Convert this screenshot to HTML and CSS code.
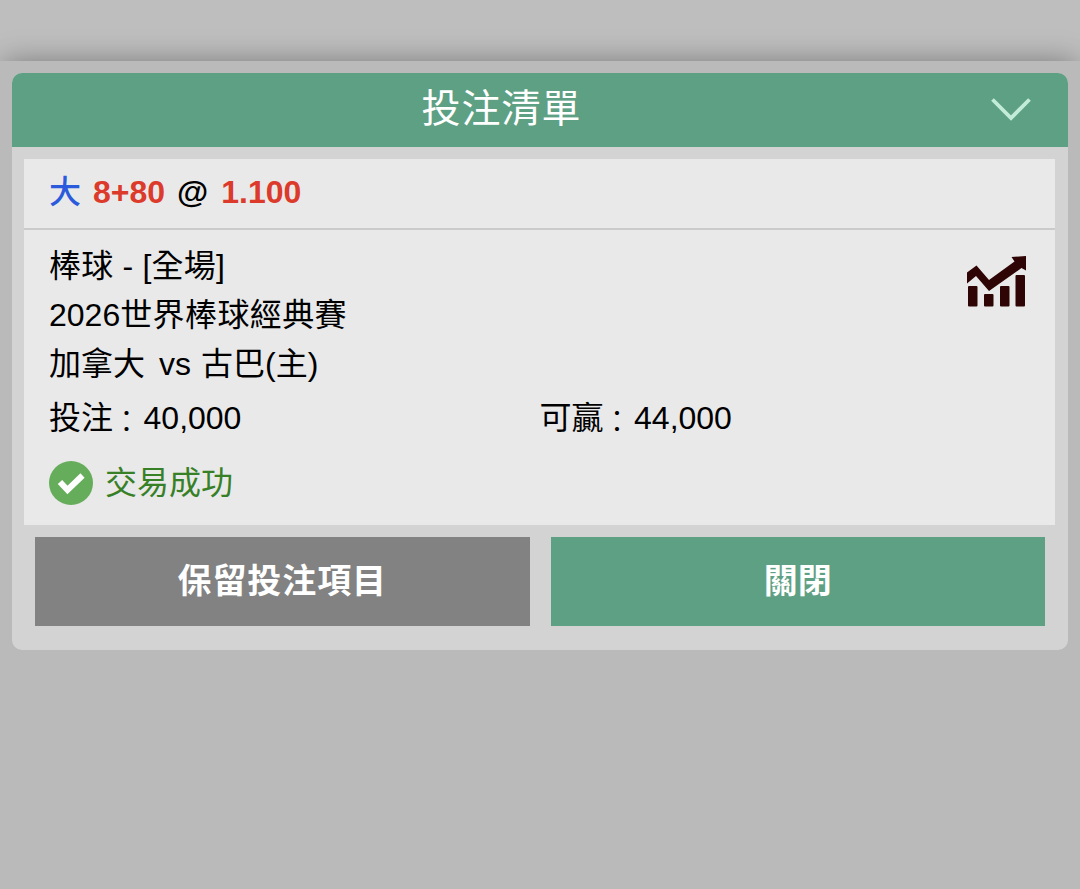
FILE: index.html
```html
<!DOCTYPE html>
<html lang="zh-TW">

<head>
  <meta charset="UTF-8">
  <meta name="viewport" content="width=device-width, initial-scale=1.0">
  <title>投注清單</title>
  <link rel="stylesheet" href="styles.css">
</head>

<body>

  <div class="sheet">
    <div class="betslip">
      <div class="header">
        <span class="title">投注清單</span>
        <svg class="chevron" width="40" height="24" viewBox="0 0 40 24">
          <path d="M1.5 1.5 L20 20 L38.5 1.5" fill="none" stroke="#c2ecd9" stroke-width="3.8" />
        </svg>
      </div>

      <div class="card">
        <div class="odds">
          <span class="pick">大</span>
          <span class="red">8+80</span>
          <span class="at">@</span>
          <span class="red">1.100</span>
        </div>

        <div class="detail">
          <div class="match">
            <div class="lines">
              <div class="line sport">棒球 - [全場]</div>
              <div class="line league">2026<span>世界棒球經典賽</span></div>
              <div class="line teams"><span>加拿大</span><span>vs</span><span>古巴(主)</span></div>
            </div>
            <svg class="stats" width="60" height="52" viewBox="0 0 60 52" fill="#2e0404">
              <path d="M0 16.5 L9.5 9.5 L22 24 L47.5 5.5 L44.5 1 L59 0 V14.5 L54.5 12 L22 35 L9 20 L0 27.5 Z" />
              <rect x="1" y="30" width="9.5" height="20.5" rx="1" />
              <rect x="17" y="38" width="9.5" height="12.5" rx="1" />
              <rect x="33" y="30" width="9.5" height="20.5" rx="1" />
              <rect x="48.5" y="19" width="9.5" height="31.5" rx="1" />
            </svg>
          </div>

          <div class="amounts">
            <div>投注<span class="colon">：</span>40,000</div>
            <div>可贏<span class="colon">：</span>44,000</div>
          </div>

          <div class="status">
            <svg width="44" height="44" viewBox="0 0 44 44">
              <circle cx="22" cy="22" r="22" fill="#66ad5b" />
              <path d="M11 21 L18.5 29 L33.5 14.5" fill="none" stroke="#fff" stroke-width="6" />
            </svg>
            <span>交易成功</span>
          </div>
        </div>
      </div>

      <div class="buttons">
        <button class="btn keep">保留投注項目</button>
        <button class="btn close">關閉</button>
      </div>
    </div>
  </div>

</body>

</html>
```
FILE: styles.css
```css
body {
  margin: 0;
  padding-top: 61px;
  background-color: #bebebe;
  font-family: "Liberation Sans", "Noto Sans CJK TC", sans-serif;
  font-size: 32px;
  color: #000;
  overflow: hidden;
}

.sheet {
  box-sizing: border-box;
  height: 828px;
  padding: 12px 12px 0;
  background-color: #bababa;
  box-shadow: 0 -2px 28px -4px rgba(0, 0, 0, 0.4);
}

.betslip {
  box-sizing: border-box;
  height: 577px;
  background-color: #d3d3d3;
  border-radius: 10px;
  overflow: hidden;
}

.header {
  display: flex;
  align-items: center;
  height: 74px;
  padding-right: 37px;
  background-color: #5ea083;
}

.title {
  flex: 1;
  font-size: 39px;
  line-height: 72px;
  height: 74px;
  letter-spacing: 1px;
  text-align: center;
  color: #fff;
}

.chevron {
  display: block;
}

.card {
  margin: 12px 13px 12px 12px;
  background-color: #e9e9e9;
}

.odds {
  display: flex;
  height: 69px;
  line-height: 67px;
  padding-left: 25px;
  border-bottom: 2px solid #cbcbcb;
  font-weight: bold;
}

.pick {
  width: 44px;
  font-weight: 500;
  color: #2b5bdc;
}

.red {
  color: #dc3a2b;
}

.at {
  padding: 0 13px 0 12px;
}

.detail {
  box-sizing: border-box;
  height: 295px;
  padding: 12px 25px 0;
}

.match {
  display: flex;
  justify-content: space-between;
}

.line {
  height: 49px;
  line-height: 49px;
  white-space: nowrap;
}

.sport {
  letter-spacing: 0.2px;
}

.league span {
  letter-spacing: 0.4px;
}

.teams {
  display: flex;
  gap: 12px;
}

.teams span:nth-child(2) {
  padding-left: 2px;
  margin-right: -2px;
}

.stats {
  margin: 14px 3px 0 0;
}

.amounts {
  display: grid;
  grid-template-columns: 1fr 1fr;
  height: 58px;
  line-height: 58px;
}

.colon {
  margin: 0 1px 0 -2.5px;
  font-weight: 300;
  line-height: 1;
  vertical-align: -4px;
}

.status {
  display: flex;
  align-items: center;
  gap: 12px;
  height: 44px;
  margin-top: 14px;
  line-height: 42px;
  color: #378026;
}

.buttons {
  display: flex;
  gap: 21px;
  padding: 0 23px;
}

.btn {
  flex: 1;
  height: 88.5px;
  padding: 0 0 5px;
  border: none;
  font-family: inherit;
  font-size: 34px;
  font-weight: bold;
  color: #fff;
  cursor: pointer;
}

.keep {
  background-color: #828282;
  letter-spacing: 0.9px;
}

.close {
  background-color: #5ea083;
}
```
